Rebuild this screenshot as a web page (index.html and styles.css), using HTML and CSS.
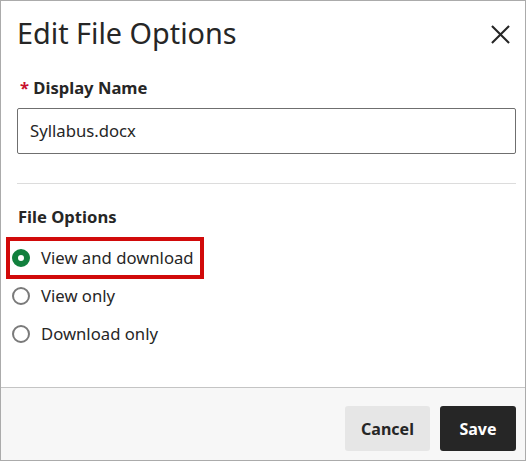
FILE: index.html
```html
<!DOCTYPE html>
<html lang="en">
<head>
<meta charset="utf-8">
<title>Edit File Options</title>
<link rel="stylesheet" href="styles.css">
</head>
<body>
<div class="dialog" role="dialog" aria-labelledby="dlg-title">
  <div class="dialog-body">
    <header class="dialog-header">
      <h1 id="dlg-title" class="dialog-title">Edit File Options</h1>
      <button class="close-btn" type="button" aria-label="Close">
        <svg width="20" height="20" viewBox="0 0 20 20" aria-hidden="true">
          <path d="M1 1 L19 19 M19 1 L1 19" stroke="#262626" stroke-width="2.2" fill="none"/>
        </svg>
      </button>
    </header>

    <label class="field-label" for="display-name"><span class="required">*</span> Display Name</label>
    <div class="text-input" id="display-name">Syllabus.docx</div>

    <hr class="divider">

    <div class="group-label">File Options</div>
    <div class="radio-group">
      <div class="radio-row">
        <span class="radio-option">
          <span class="radio radio-checked"></span>
          <span class="radio-text">View and download</span>
          <span class="callout"></span>
        </span>
      </div>
      <div class="radio-row">
        <span class="radio-option">
          <span class="radio"></span>
          <span class="radio-text">View only</span>
        </span>
      </div>
      <div class="radio-row">
        <span class="radio-option">
          <span class="radio"></span>
          <span class="radio-text">Download only</span>
        </span>
      </div>
    </div>
  </div>

  <footer class="dialog-footer">
    <button class="btn btn-cancel" type="button">Cancel</button>
    <button class="btn btn-save" type="button">Save</button>
  </footer>
</div>
</body>
</html>
```

FILE: styles.css
```css
* {
  box-sizing: border-box;
}

html, body {
  margin: 0;
  padding: 0;
  background: #ffffff;
}

body {
  font-family: "Noto Sans", "Open Sans", sans-serif;
  color: #262626;
}

.dialog {
  width: 526px;
  height: 461px;
  border: 1px solid #ababab;
  display: flex;
  flex-direction: column;
  background: #ffffff;
}

.dialog-body {
  flex: 1;
  padding: 13px 9px 0 16px;
}

.dialog-header {
  display: flex;
  align-items: center;
  justify-content: space-between;
  height: 38px;
}

.dialog-title {
  margin: 0;
  font-size: 28.8px;
  font-weight: 400;
  line-height: 38px;
  color: #262626;
}

.close-btn {
  width: 24px;
  height: 24px;
  padding: 0;
  margin: 2px 4px 0 0;
  border: 0;
  background: none;
  display: flex;
  align-items: center;
  justify-content: center;
}

.close-btn svg {
  width: 19px;
  height: 19px;
}

.field-label {
  display: block;
  margin-top: 25px;
  font-size: 16.6px;
  font-weight: 700;
  line-height: 22px;
  padding-left: 3px;
}

.required {
  color: #c8102e;
  font-weight: 700;
}

.text-input {
  margin-top: 9px;
  height: 46px;
  border: 1px solid #6f6f6f;
  border-radius: 2px;
  padding: 11px 12px;
  font-size: 16.7px;
  line-height: 22px;
  color: #262626;
}

.divider {
  margin: 29px 0 0;
  border: 0;
  border-top: 1px solid #dcdcdc;
  height: 0;
}

.group-label {
  margin-top: 22px;
  font-size: 16.6px;
  font-weight: 700;
  line-height: 22px;
  padding-left: 1px;
}

.radio-group {
  margin: 11px 0 0 -5px;
}

.radio-row {
  height: 38px;
  display: flex;
  align-items: center;
}

.radio-option {
  position: relative;
  display: inline-flex;
  align-items: center;
  gap: 11px;
  font-size: 16.7px;
  line-height: 22px;
}

.radio {
  width: 18px;
  height: 18px;
  border-radius: 50%;
  border: 2px solid #7a7a7a;
  background: #ffffff;
  flex: none;
}

.radio-checked {
  border: 6px solid #11803d;
  background: #ffffff;
}

/* red highlight frame drawn over the selected option */
.callout {
  position: absolute;
  left: -6px;
  right: -10px;
  top: -10px;
  bottom: -10px;
  border: 4px solid #d10a0a;
  pointer-events: none;
}

.dialog-footer {
  height: 73px;
  border-top: 1px solid #c4c4c4;
  background: #f7f7f7;
  display: flex;
  justify-content: flex-end;
  align-items: flex-start;
  gap: 10px;
  padding: 18px 9px 0 0;
}

.btn {
  height: 45px;
  border: 0;
  border-radius: 3px;
  font-family: "Noto Sans", "Open Sans", sans-serif;
  font-size: 16px;
  font-weight: 700;
  padding: 0;
}

.btn-cancel {
  width: 85px;
  background: #e6e6e6;
  color: #262626;
}

.btn-save {
  width: 76px;
  background: #262626;
  color: #ffffff;
}
```
